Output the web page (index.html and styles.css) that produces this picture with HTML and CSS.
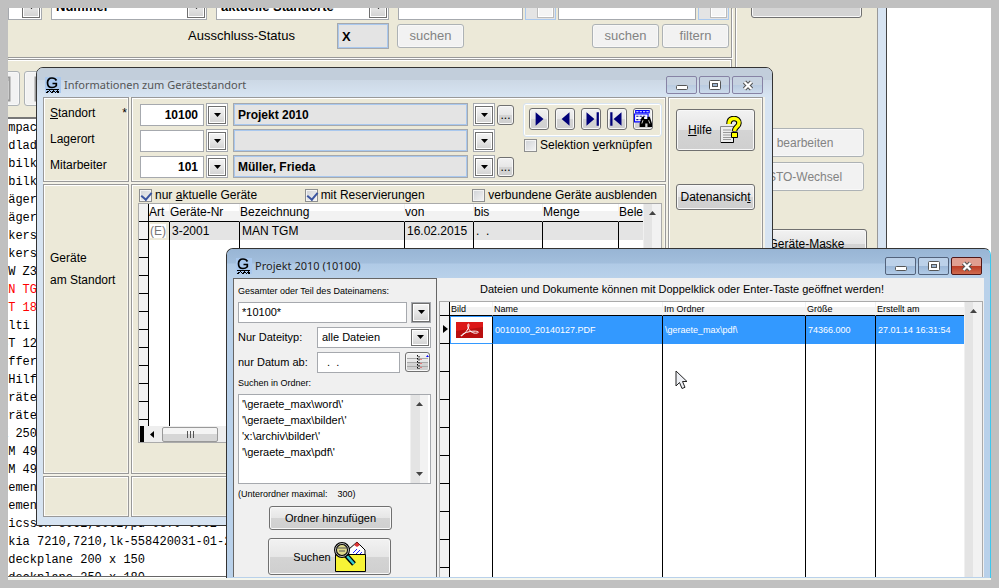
FILE: index.html
```html
<!DOCTYPE html>
<html lang="de">
<head>
<meta charset="utf-8">
<title>Informationen zum Gerätestandort</title>
<link rel="stylesheet" href="styles.css">
</head>
<body>
<svg class="defs" aria-hidden="true">
  <symbol id="down" viewBox="0 0 7 4"><path d="M0 0h7L3.500 4z"/></symbol>
  <symbol id="logo" viewBox="0 0 16 16">
    <rect width="16" height="16" fill="#a9c8ee"/>
    <path d="M11.500 3.500C10.500 1.500 8.500 1 7 1 4 1 2.500 3 2.500 5.700S4.200 10.500 7 10.500c2 0 3.300-.7 4.300-1.800V6.500H7.500" fill="none" stroke="#000" stroke-width="1.700"/>
    <path d="M1 12.500h13M2 14.500h2m1 0h1m1 0h3m1 0h3M1 15.500h2m3 0h2m2 0h1m1 0h2M4 13.500h1m3 0h1m3 0h1" stroke="#000" fill="none"/>
  </symbol>
  <symbol id="min" viewBox="0 0 16 16"><rect x="2.500" y="8.500" width="11" height="4" rx="1" fill="#fff" stroke="#555"/></symbol>
  <symbol id="max" viewBox="0 0 16 16"><rect x="2.500" y="3.500" width="11" height="9" rx="1" fill="#fff" stroke="#555"/><rect x="5.500" y="6.500" width="5" height="3" fill="#9db6d2" stroke="#555"/></symbol>
  <symbol id="close" viewBox="0 0 16 16"><path d="M4.500 5l7 7m0-7l-7 7" stroke="#555" stroke-width="4.500"/><path d="M4.500 5l7 7m0-7l-7 7" stroke="#fff" stroke-width="2.300"/></symbol>
  <symbol id="doc" viewBox="0 0 18 26"><path d="M1.500 1.500h15v23h-15z" fill="#fff" stroke="#999" stroke-width="2"/><path d="M2 4h14M5 9h9M5 12h9M5 15h9M5 18h9" stroke="#999"/></symbol>
</svg>

<main class="screen">

  <div class="back">
    <div class="back-main">
      <section class="filter">
        <div class="filter-fields">
          <span class="combo w-xs"><select aria-label="Auswahl"><option></option></select><i class="drop"><svg><use href="#down"/></svg></i></span>
          <span class="combo w-md"><select aria-label="Suchfeld"><option>Nummer</option></select><i class="drop"><svg><use href="#down"/></svg></i></span>
          <span class="combo w-lg"><select aria-label="Standorte"><option>aktuelle Standorte</option></select><i class="drop"><svg><use href="#down"/></svg></i></span>
          <div class="filter-pair">
            <input class="field" aria-label="Suchbegriff"><button class="lookup" aria-label="Auswahl"><i class="drop"></i></button>
            <input class="field wide" aria-label="Filterbegriff"><button class="lookup" aria-label="Auswahl"><i class="drop"></i></button>
          </div>
        </div>
        <div class="filter-status">
          <label for="status">Ausschluss-Status</label>
          <input id="status" class="field readonly" value="X" readonly>
          <button class="btn off" disabled>suchen</button>
          <button class="btn off push" disabled>suchen</button>
          <button class="btn off last" disabled>filtern</button>
        </div>
      </section>
      <section class="tools">
        <button class="btn off tool first" disabled aria-label="Liste"><svg><use href="#doc"/></svg></button>
        <button class="btn off tool" disabled aria-label="Details"><svg><use href="#doc"/></svg></button>
      </section>
      <ul class="device-list">
        <li>ompact</li><li>adlader</li><li>obilkran</li><li>obilkran</li><li>räger</li><li>räger</li><li>ckers</li><li>ckers</li>
        <li>MW Z3</li><li class="red">AN TGM</li><li class="red">ST 18</li><li>ulti</li><li>ST 12</li><li>offer</li><li>&nbsp;Hilfe</li>
        <li>eräte</li><li>eräte</li><li>X 250</li><li>GM 49</li><li>GM 49</li><li>iemens</li><li>iemens</li>
        <li>ricsson 8062,8062,pd-0870-0002-0</li><li>okia 7210,7210,lk-558420031-01-2</li><li>odeckplane 200 x 150</li><li>odeckplane 250 x 180</li>
      </ul>
    </div>
    <aside class="back-side">
      <button class="btn top" aria-label="Standort"></button>
      <button class="btn off" disabled>bearbeiten</button>
      <button class="btn off" disabled>STO-Wechsel</button>
      <button class="btn mask">Geräte-Maske</button>
    </aside>
  </div>

  <section class="window site">
    <header class="titlebar">
      <svg class="logo"><use href="#logo"/></svg><h1>Informationen zum Gerätestandort</h1>
      <div class="caption">
        <button aria-label="Minimieren"><svg><use href="#min"/></svg></button>
        <button aria-label="Maximieren"><svg><use href="#max"/></svg></button>
        <button aria-label="Schließen"><svg><use href="#close"/></svg></button>
      </div>
    </header>
    <div class="site-body">
      <div class="panel labels">
        <label for="standort"><u>S</u>tandort <span>*</span></label>
        <label for="lagerort">Lagerort</label>
        <label for="mitarbeiter">Mitarbeiter</label>
      </div>
      <div class="panel master">
        <div class="rows">
          <div class="row">
            <input id="standort" class="field num" value="10100"><button class="dropbox" aria-label="Standort wählen"><i class="drop"><svg><use href="#down"/></svg></i></button>
            <input class="field readonly name" value="Projekt 2010" aria-label="Standort Name" readonly><button class="dropbox" aria-label="Name wählen"><i class="drop"><svg><use href="#down"/></svg></i></button><button class="btn dots">...</button>
          </div>
          <div class="row">
            <input id="lagerort" class="field num"><button class="dropbox" aria-label="Lagerort wählen"><i class="drop"><svg><use href="#down"/></svg></i></button>
            <input class="field readonly name" aria-label="Lagerort Name" readonly><button class="dropbox" aria-label="Name wählen"><i class="drop"><svg><use href="#down"/></svg></i></button><span class="dots"></span>
          </div>
          <div class="row">
            <input id="mitarbeiter" class="field num" value="101"><button class="dropbox" aria-label="Mitarbeiter wählen"><i class="drop"><svg><use href="#down"/></svg></i></button>
            <input class="field readonly name" value="Müller, Frieda" aria-label="Mitarbeiter Name" readonly><button class="dropbox" aria-label="Name wählen"><i class="drop"><svg><use href="#down"/></svg></i></button><button class="btn dots">...</button>
          </div>
        </div>
        <div class="nav">
          <div class="nav-buttons">
            <button class="btn" aria-label="Weiter"><svg viewBox="0 0 16 16"><path d="M5 2l7 6-7 6z"/></svg></button>
            <button class="btn" aria-label="Zurück"><svg viewBox="0 0 16 16"><path d="M12 2L5 8l7 6z"/></svg></button>
            <button class="btn" aria-label="Letzter"><svg viewBox="0 0 16 16"><path d="M4 2l7 6-7 6zM13 2h2v12h-2z"/></svg></button>
            <button class="btn" aria-label="Erster"><svg viewBox="0 0 16 16"><path d="M12 2L5 8l7 6zM2 2h2v12H2z"/></svg></button>
            <button class="btn" aria-label="Suchen"><svg viewBox="0 0 16 16"><path d="M1 0h13v3H1z" fill="#00f"/><path d="M2 1.500h2m1 0h2m1 0h2m1 0h2" stroke="#fff"/><path d="M.5 3.500h12v7H.500z" fill="#fff" stroke="#00f"/><path d="M2 5.500h8M2 8.500h4" stroke="#118" stroke-dasharray="2 1"/><path d="M7 6h2v2h3V6h2l2 6v3h-4v-3h-2v3H5v-3z" fill="#000"/><path d="M7 12l1-3m5 0l1 3" stroke="#fff" stroke-width=".7"/></svg></button>
          </div>
          <label class="check"><input type="checkbox"><span>Selektion <u>v</u>erknüpfen</span></label>
        </div>
      </div>
      <div class="panel actions">
        <button class="btn help"><span><u>H</u>ilfe</span>
          <svg viewBox="0 0 24 28"><path d="M1.500 10.500h13v16h-13z" fill="#eee" stroke="#888"/><path d="M2 26.500h12.500V21" fill="none" stroke="#000"/><path d="M4 14h8M4 16.500h8M4 19h8M4 21.500h8M4 23.500h8" stroke="#999"/><path d="M10 8c0-4 2-5.500 5-5.500s5 1.800 5 4.500c0 4-4.500 3.500-4.500 8.500" fill="none" stroke="#000" stroke-width="5.500"/><path d="M10 8c0-4 2-5.500 5-5.500s5 1.800 5 4.500c0 4-4.500 3.500-4.500 8" fill="none" stroke="#ff0" stroke-width="3.500"/><path d="M12.500 16.500h6v5h-6z" fill="#ff0" stroke="#000"/></svg>
        </button>
        <button class="btn">Datenansich<u>t</u></button>
      </div>
      <div class="panel side-label"><p>Geräte</p><p>am Standort</p></div>
      <div class="panel devices">
        <div class="checks">
          <label class="check"><input type="checkbox" checked><span>nur <u>a</u>ktuelle Geräte</span></label>
          <label class="check"><input type="checkbox" checked><span>mit Reservierungen</span></label>
          <label class="check"><input type="checkbox"><span>verbundene Geräte ausblenden</span></label>
        </div>
        <div class="grid">
          <div class="grid-view">
            <table class="device-table">
              <colgroup><col class="c-head"><col class="c-art"><col class="c-nr"><col class="c-bez"><col class="c-date"><col class="c-date"><col class="c-menge"><col></colgroup>
              <thead><tr><th></th><th>Art</th><th>Geräte-Nr</th><th>Bezeichnung</th><th>von</th><th>bis</th><th>Menge</th><th>Bele</th></tr></thead>
              <tbody>
                <tr class="current"><th></th><td class="art"><span>(E)</span></td><td>3-2001</td><td>MAN TGM</td><td>16.02.2015</td><td>.&nbsp; .</td><td></td><td></td></tr>
                <tr><th></th><td></td><td></td><td></td><td></td><td></td><td></td><td></td></tr>
                <tr><th></th><td></td><td></td><td></td><td></td><td></td><td></td><td></td></tr>
                <tr><th></th><td></td><td></td><td></td><td></td><td></td><td></td><td></td></tr>
                <tr><th></th><td></td><td></td><td></td><td></td><td></td><td></td><td></td></tr>
                <tr><th></th><td></td><td></td><td></td><td></td><td></td><td></td><td></td></tr>
                <tr><th></th><td></td><td></td><td></td><td></td><td></td><td></td><td></td></tr>
                <tr><th></th><td></td><td></td><td></td><td></td><td></td><td></td><td></td></tr>
                <tr><th></th><td></td><td></td><td></td><td></td><td></td><td></td><td></td></tr>
                <tr><th></th><td></td><td></td><td></td><td></td><td></td><td></td><td></td></tr>
                <tr><th></th><td></td><td></td><td></td><td></td><td></td><td></td><td></td></tr>
                <tr><th></th><td></td><td></td><td></td><td></td><td></td><td></td><td></td></tr>
              </tbody>
            </table>
            <div class="vscroll"><svg class="up"><use href="#down"/></svg></div>
          </div>
          <div class="hscroll"><i class="split"></i><svg viewBox="0 0 4 7"><path d="M4 0v7L0 3.500z"/></svg><b class="thumb"><svg viewBox="0 0 9 7"><path d="M1.500 0v7M4.500 0v7M7.500 0v7" stroke="#555"/></svg></b></div>
        </div>
      </div>
      <div class="panel"></div>
      <div class="panel"></div>
    </div>
  </section>

  <section class="window project">
    <header class="titlebar">
      <svg class="logo"><use href="#logo"/></svg><h1>Projekt 2010 (10100)</h1>
      <div class="caption">
        <button aria-label="Minimieren"><svg><use href="#min"/></svg></button>
        <button aria-label="Maximieren"><svg><use href="#max"/></svg></button>
        <button class="red-close" aria-label="Schließen"><svg><use href="#close"/></svg></button>
      </div>
    </header>
    <div class="project-body">
      <form class="search">
        <label class="small" for="fname">Gesamter oder Teil des Dateinamens:</label>
        <div class="line"><input id="fname" class="field" value="*10100*"><button type="button" class="dropbox" aria-label="Dateiname wählen"><i class="drop"><svg><use href="#down"/></svg></i></button></div>
        <div class="line"><label for="ftype">Nur Dateityp:</label><span class="combo"><select id="ftype"><option>alle Dateien</option></select><i class="drop"><svg><use href="#down"/></svg></i></span></div>
        <div class="line date"><label for="fdate">nur Datum ab:</label><input id="fdate" class="field" value=" .  ."><button type="button" class="btn calendar" aria-label="Kalender"><svg viewBox="0 0 22 16"><path d="M0 4.500h21M0 8.500h21M0 12.500h21" stroke="#aaa"/><path d="M10.500 1v14M12 2v13" stroke="#000" stroke-dasharray="1.500 1.500"/><path d="M14 5v10" stroke="#e22" stroke-dasharray="1 3"/><path d="M19 3l1.500-2L22 3z" fill="#00f"/></svg></button></div>
        <label class="small" for="folders">Suchen in Ordner:</label>
        <div class="folders"><textarea id="folders" class="field">'\geraete_max\word\'
'\geraete_max\bilder\'
'x:\archiv\bilder\'
'\geraete_max\pdf\'</textarea><div class="vscroll"><svg class="up"><use href="#down"/></svg><svg><use href="#down"/></svg></div></div>
        <p class="small">(Unterordner maximal: &nbsp;&nbsp; 300)</p>
        <button type="button" class="btn add">Ordner hinzufügen</button>
        <button type="button" class="btn find">Suchen
          <svg viewBox="0 0 32 32"><path d="M14 9L23 1l8 8v6H15z" fill="#fff" stroke="#000"/><path d="M20 4l3-3 3 3-3 2z" fill="#d33"/><path d="M19 12l4-4m-1 5l4-4m-1 5l3-3" stroke="#22f"/><path d="M1.500 13.500h30v17h-30z" fill="#f7f336" stroke="#000"/><path d="M11 13l9 10" stroke="#000" stroke-width="5"/><path d="M13 15l7 8" stroke="#3cc" stroke-width="2.500"/><circle cx="8" cy="9" r="6.500" fill="#ded98a" stroke="#000" stroke-width="3"/><circle cx="8" cy="9" r="6.500" fill="none" stroke="#bbb"/><path d="M2 7h12M5 10h6" stroke="#555"/></svg>
        </button>
      </form>
      <div class="results">
        <p class="hint">Dateien und Dokumente können mit Doppelklick oder Enter-Taste geöffnet werden!</p>
        <div class="grid">
          <div class="grid-view">
            <table class="file-table">
              <colgroup><col class="c-head"><col class="c-pic"><col class="c-name"><col class="c-dir"><col class="c-size"><col></colgroup>
              <thead><tr><th></th><th>Bild</th><th>Name</th><th>Im Ordner</th><th>Größe</th><th>Erstellt am</th></tr></thead>
              <tbody>
                <tr class="selected"><th><svg viewBox="0 0 5 8"><path d="M0 0l5 4-5 4z"/></svg></th><td class="pic"><svg viewBox="0 0 27 16"><path d="M0 0h27v16H0z" fill="#b90f0f"/><path d="M0 0h27v5L0 9z" fill="#dc1818"/><path d="M5 14c3-1 8-7 8-11 0-2-2-1-1 2 1 4 5 7 9 6 4-1-1-3-9-1-4 1-7 3-7 4" fill="none" stroke="#fff"/></svg></td><td>0010100_20140127.PDF</td><td>\geraete_max\pdf\</td><td>74366.000</td><td>27.01.14 16:31:54</td></tr>
                <tr><th></th><td></td><td></td><td></td><td></td><td></td></tr>
                <tr><th></th><td></td><td></td><td></td><td></td><td></td></tr>
                <tr><th></th><td></td><td></td><td></td><td></td><td></td></tr>
                <tr><th></th><td></td><td></td><td></td><td></td><td></td></tr>
                <tr><th></th><td></td><td></td><td></td><td></td><td></td></tr>
                <tr><th></th><td></td><td></td><td></td><td></td><td></td></tr>
                <tr><th></th><td></td><td></td><td></td><td></td><td></td></tr>
                <tr><th></th><td></td><td></td><td></td><td></td><td></td></tr>
                <tr><th></th><td></td><td></td><td></td><td></td><td></td></tr>
              </tbody>
            </table>
            <div class="vscroll"><svg class="up"><use href="#down"/></svg></div>
          </div>
        </div>
      </div>
    </div>
  </section>

  <svg class="pointer" viewBox="0 0 13 20" aria-hidden="true"><path d="M1 1v15l3.500-3.500L7 18.500l3-1.200-2.500-5.800H12z" fill="#eef0f5" stroke="#222"/></svg>
</main>
</body>
</html>
```

FILE: styles.css
```css
* { box-sizing: border-box; }

body {
  margin: 0;
  padding: 8px;
  min-height: 100vh;
  background: #c0c0c0;
  color: #000;
  font: 12px/16px "Liberation Sans", Arial, sans-serif;
}

h1, p, ul { margin: 0; padding: 0; }
ul { list-style: none; }
i { font-style: normal; }
button, input, select, textarea { margin: 0; padding: 0; border-radius: 0; color: inherit; font: inherit; }
.defs { position: absolute; width: 0; height: 0; }

.screen {
  position: relative;
  height: calc(100vh - 16px);
  overflow: hidden;
  background: #fff;
  border-bottom: 2px solid #f4f6ee;
}

/* Shared controls */
.btn {
  display: flex;
  align-items: center;
  justify-content: center;
  border: 1px solid #707070;
  border-radius: 3px;
  background: linear-gradient(#f2f2f2, #e6e6e6 50%, #d4d4d4 51%, #cfcfcf);
  box-shadow: inset 0 0 0 1px #f8f8f8;
  white-space: nowrap;
}
.btn.off { border-color: #adb2b5; background: #f2f2f2; color: #838383; }
.field { min-width: 0; border: 1px solid #a6a9ae; background: #fff; }
.field.readonly { border: 1px solid #a6a9ae; box-shadow: inset 1px 1px #a9c8ee, inset -1px -1px #a9c8ee; background: #e4e4e4; padding-left: 4px; font-weight: bold; }
.drop {
  display: flex;
  align-items: center;
  justify-content: center;
  width: 18px;
  height: 18px;
  border: 1px solid #6f6f6f;
  background: linear-gradient(#f4f4f4, #e6e6e6 50%, #d2d2d2);
  box-shadow: inset 0 0 0 1px #fff;
}
.drop svg { width: 7px; height: 4px; }
.dropbox { display: flex; align-items: center; justify-content: center; width: 22px; height: 23px; border: 1px solid #a6a9ae; background: #fff; }
.combo { position: relative; display: flex; border: 1px solid #a6a9ae; background: #fff; }
.combo select { flex: 1; width: 100%; appearance: none; border: 0; background: none; padding-left: 4px; }
.combo .drop { position: absolute; right: 1px; top: 1px; bottom: 1px; height: auto; pointer-events: none; }
.check { display: flex; align-items: center; gap: 3px; white-space: nowrap; }
.check input { appearance: none; width: 13px; height: 13px; border: 1px solid #8e8f8f; background: linear-gradient(135deg, #cfd2d6, #f4f4f4); box-shadow: inset 0 0 0 1px #f4f4f4; }
.check input:checked::after { content: ""; display: block; width: 5px; height: 8px; margin: 0 0 0 3px; border: solid #3a55a0; border-width: 0 2px 2px 0; transform: rotate(40deg); }

/* Main form behind the windows */
.back { display: flex; width: 879px; height: calc(100% - 1px); border-right: 1px solid #444; border-bottom: 1px solid #666; background: #ece9d8; }
.back-main { display: flex; flex-direction: column; flex: 1; min-width: 0; margin-right: 3px; }
.back-side { width: 151px; padding: 0 14px 0 10px; border-left: 1px solid #999; border-right: 8px solid #d7e4f2; box-shadow: inset 1px 0 #fff, inset -1px 0 #999; }
.filter { height: 50px; padding-right: 2px; border: solid #999; border-width: 0 1px 1px 0; box-shadow: 1px 1px #fff; font-size: 13px; }
.filter-fields { display: flex; gap: 9px; height: 26px; margin-top: -14px; font-weight: bold; }
.filter-fields .combo { flex: none; }
.w-xs { width: 34px; }
.w-md { width: 156px; }
.w-lg { width: 173px; }
.filter-pair { display: flex; flex: 1; gap: 2px; min-width: 0; }
.filter-pair .field { flex: 9 1 0; width: 0; }
.filter-pair .field.wide { flex-grow: 10; }
.lookup { display: flex; flex: none; justify-content: flex-end; width: 31px; padding: 1px; border: 1px solid #a9c8ee; background: #e4e4e4; }
.lookup .drop { width: 17px; height: 22px; border-color: #bbb; background: #f4f4f4; }
.filter-status { display: flex; align-items: center; margin-top: 3px; padding-left: 180px; }
.filter-status label { width: 149px; }
.filter-status .field { width: 52px; height: 26px; margin-right: 8px; }
.filter-status .btn { width: 67px; height: 24px; }
.filter-status .push { margin-left: auto; }
.filter-status .last { margin-left: 3px; }
.tools { display: flex; gap: 4px; height: 58px; margin-top: 1px; padding-top: 11px; border: solid #999; border-width: 1px 1px 0 0; box-shadow: inset -1px 1px #fff; }
.tool { width: 37px; height: 35px; }
.tool.first { margin-left: -25px; }
.tool svg { width: 18px; height: 26px; }
.device-list { flex: 1; overflow: hidden; margin-left: -7px; border-top: 2px solid #777; background: #fff; font: 12px/18px "Liberation Mono", monospace; white-space: nowrap; }
.red { color: #f00; }
.back-side .btn { width: 118px; height: 29px; margin-bottom: 5px; }
.back-side .btn.top { width: 111px; height: 28px; margin: -18px 0 110px 5px; background: #d4d4d4; }
.back-side .btn.mask { width: 121px; margin-top: 38px; }

/* Windows */
.window { position: absolute; display: flex; flex-direction: column; border: 1px solid #333; border-radius: 7px 7px 0 0; }
.site { left: 28px; top: 59px; width: 737px; height: 459px; padding: 0 7px 8px 6px; background: #d7e4f2; }
.project { left: 218px; top: 240px; right: 0; bottom: -8px; padding: 0 6px 8px 6px; border-right: 1px solid #3cc8ee; background: #b9d1ea; }
.site .titlebar { background: linear-gradient(#c2cedb 12px, #ccd8e5 12px, #d7e4f2); margin: 0 -7px 0 -6px; padding: 0 9px 0 8px; }
.project .titlebar { background: linear-gradient(#98b5d5, #a2bedc 14px, #b0cae6 15px, #b9d1ea); margin: 0 -6px; padding: 0 8px 0 9px; }
.titlebar { display: flex; align-items: center; height: 29px; flex: none; gap: 3px; border-radius: 6px 6px 0 0; }
.titlebar h1 { flex: 1; padding-top: 5px; color: #555; font: 11px/16px "Noto Sans", "Open Sans", sans-serif; }
.project h1 { color: #222; }
.logo { width: 16px; height: 16px; margin-top: 4px; }
.caption { display: flex; gap: 2px; padding-top: 5px; }
.caption button { display: flex; align-items: center; justify-content: center; width: 31px; height: 18px; border: 1px solid #8783a5; border-radius: 2px; background: linear-gradient(#c6d2e0 50%, #b9cbe0 50%, #cbdaeb); }
.project .caption button { border-color: #53637c; background: linear-gradient(#bcd1e9 50%, #9cb8d8 50%, #b0cae6); }
.project .caption .red-close { border-color: #501818; background: linear-gradient(#e09f91 50%, #bb3b24 50%, #cf6b50); }
.caption svg { flex: none; width: 16px; height: 16px; }

/* Site window */
.site-body { flex: 1; display: grid; grid-template: 85px 1fr 41px / 86px 1fr 95px; gap: 2px; min-height: 0; padding: 0 2px 0 0; background: #f4f2e8; }
.panel { border: 1px solid #999; background: #ece9d8; box-shadow: inset 1px 1px #fff, inset -1px -1px #f8f6ee; min-width: 0; min-height: 0; }
.labels { display: flex; flex-direction: column; gap: 10px; padding: 7px 1px 0 6px; }
.labels label { display: flex; white-space: pre; }
.labels span { margin-left: auto; }
.master { display: flex; gap: 9px; padding: 5px 3px 0 8px; }
.rows { flex: 1; display: flex; flex-direction: column; gap: 3px; min-width: 0; }
.row { display: flex; align-items: center; gap: 2px; height: 23px; }
.row .num { width: 64px; height: 22px; padding-right: 5px; text-align: right; font-weight: bold; }
.row .name { flex: 1; height: 23px; margin: 0 3px; }
.dots { width: 17px; height: 20px; }
.nav { width: 139px; }
.nav-buttons { display: flex; justify-content: space-between; height: 34px; padding: 4px 8px 0 5px; border: 1px solid #d7e4f2; border-radius: 3px; box-shadow: inset 0 0 0 1px #fff; }
.nav-buttons .btn { width: 20px; height: 22px; padding: 0; }
.nav-buttons svg { width: 18px; height: 18px; flex: none; fill: #000078; }
.nav .check { padding-left: 1px; }
.actions { grid-row: 1 / 4; grid-column: 3; padding: 11px 7px; }
.actions .btn { width: 100%; height: 26px; }
.actions .help { height: 42px; gap: 7px; margin-bottom: 33px; }
.help svg { width: 24px; height: 28px; }
.side-label { padding: 65px 6px 0; }
.side-label p { margin-bottom: 6px; }
.devices { display: flex; flex-direction: column; padding: 2px 3px 30px 6px; }
.checks { display: flex; justify-content: space-between; padding: 0 5px 0 1px; }
.grid { flex: 1; display: flex; flex-direction: column; min-height: 0; border: 1px solid #aaa; background: #fff; }
.grid-view { flex: 1; display: flex; min-height: 0; overflow: hidden; }
table { flex: 1; min-width: 0; width: 0; align-self: flex-start; table-layout: fixed; border-collapse: separate; border-spacing: 0; }
th, td { overflow: hidden; padding: 0 0 0 2px; border-right: 1px solid #000; text-align: left; font-weight: normal; white-space: nowrap; }
td:last-child, thead th:last-child { border-right: 0; }
thead th { border-bottom: 1px solid #000; border-right-color: #f2f2f2; background: linear-gradient(#fff 40%, #f2f2f2 40%); }
tr > th:first-child { border-right: 1px solid #000; background: #f2f2f2; }
tbody th:first-child { border-bottom: 1px solid #000; }
.device-table { line-height: 15px; }
.device-table tr { height: 18px; }
.device-table thead th { padding-left: 0; }
.device-table .current td { background: #e4e4e4; }
.device-table .current .art { background: #ece9d8; padding-left: 1px; color: #777; }
.device-table .current .art span { background: #fff; }
.c-head { width: 10px; }
.c-art { width: 21px; }
.c-nr { width: 70px; }
.c-bez { width: 165px; }
.c-date { width: 69px; }
.c-menge { width: 76px; }
.vscroll { display: flex; flex-direction: column; align-items: center; justify-content: space-between; width: 18px; padding: 7px 0; border-left: 1px solid #f0f0f0; background: linear-gradient(90deg, #e4e4e4 50%, #f2f2f2 50%); }
.vscroll svg { width: 7px; height: 4px; fill: #444; }
.up { transform: rotate(180deg); }
.hscroll { display: flex; align-items: center; height: 16px; background: #eee; }
.split { width: 4px; height: 100%; margin-left: 1px; background: #000; }
.hscroll > svg { width: 4px; height: 7px; margin: 0 8px 0 6px; }
.thumb { display: flex; align-items: center; justify-content: center; width: 56px; height: 15px; border: 1px solid #999; border-radius: 2px; background: linear-gradient(#f4f4f4 50%, #d6d6d6 50%); }
.thumb svg { width: 9px; height: 7px; }

/* Project window */
.project-body { flex: 1; display: flex; min-height: 0; background: #f0f0f0; font-size: 11px; }
.search { display: flex; flex-direction: column; width: 204px; flex: none; padding: 5px 5px 0 4px; border: solid #666; border-width: 1px 1px 0 1px; }
.small { font-size: 9px; line-height: 14px; }
.line { display: flex; align-items: center; height: 22px; }
.line .field { flex: 1; height: 21px; padding-left: 3px; }
.line label { width: 79px; }
.line .dropbox { width: 20px; height: 21px; margin-left: 4px; }
.search > .line { margin-top: 3px; }
.line .combo { flex: 1; height: 21px; }
.line .dropbox .drop { width: 18px; height: 19px; }
.line.date .field { padding-left: 6px; }
.calendar { width: 25px; height: 20px; margin: 0 1px 0 5px; }
.calendar svg { width: 22px; height: 16px; flex: none; }
.search .date + .small { margin-top: 3px; }
.folders { display: flex; height: 90px; margin-top: 4px; border: 1px solid #a6a9ae; background: #fff; padding-right: 2px; }
.folders textarea { flex: 1; resize: none; overflow: hidden; padding: 1px 3px; border: 0; line-height: 16px; }
.folders + .small { margin-top: 3px; }
.add { width: 123px; height: 24px; margin: 5px 0 8px 31px; }
.find { width: 123px; height: 37px; margin-left: 30px; gap: 3px; }
.find svg { width: 32px; height: 32px; }
.results { flex: 1; display: flex; flex-direction: column; min-width: 0; padding: 2px 1px 0 2px; }
.hint { height: 21px; padding-left: 41px; line-height: 18px; white-space: nowrap; }
.results .grid { border-bottom: 0; }
.results .grid-view { font-size: 9px; }
.file-table tr { height: 28px; }
.file-table thead tr { height: 14px; }
.file-table thead th { padding-left: 1px; line-height: 12px; }
.file-table .selected td { background: #3399ff; color: #fff; }
.file-table .selected .pic { border: 1px solid #3399ff; border-right-color: #000; background: #fff; padding-left: 5px; }
.file-table tbody th { padding-left: 3px; }
.selected th svg { width: 5px; height: 8px; }
.pic svg { display: block; width: 27px; height: 16px; }
.c-pic { width: 43px; }
.c-name { width: 170px; }
.c-dir { width: 143px; }
.c-size { width: 70px; }

.pointer { position: absolute; left: 667px; top: 362px; width: 13px; height: 20px; }
```
